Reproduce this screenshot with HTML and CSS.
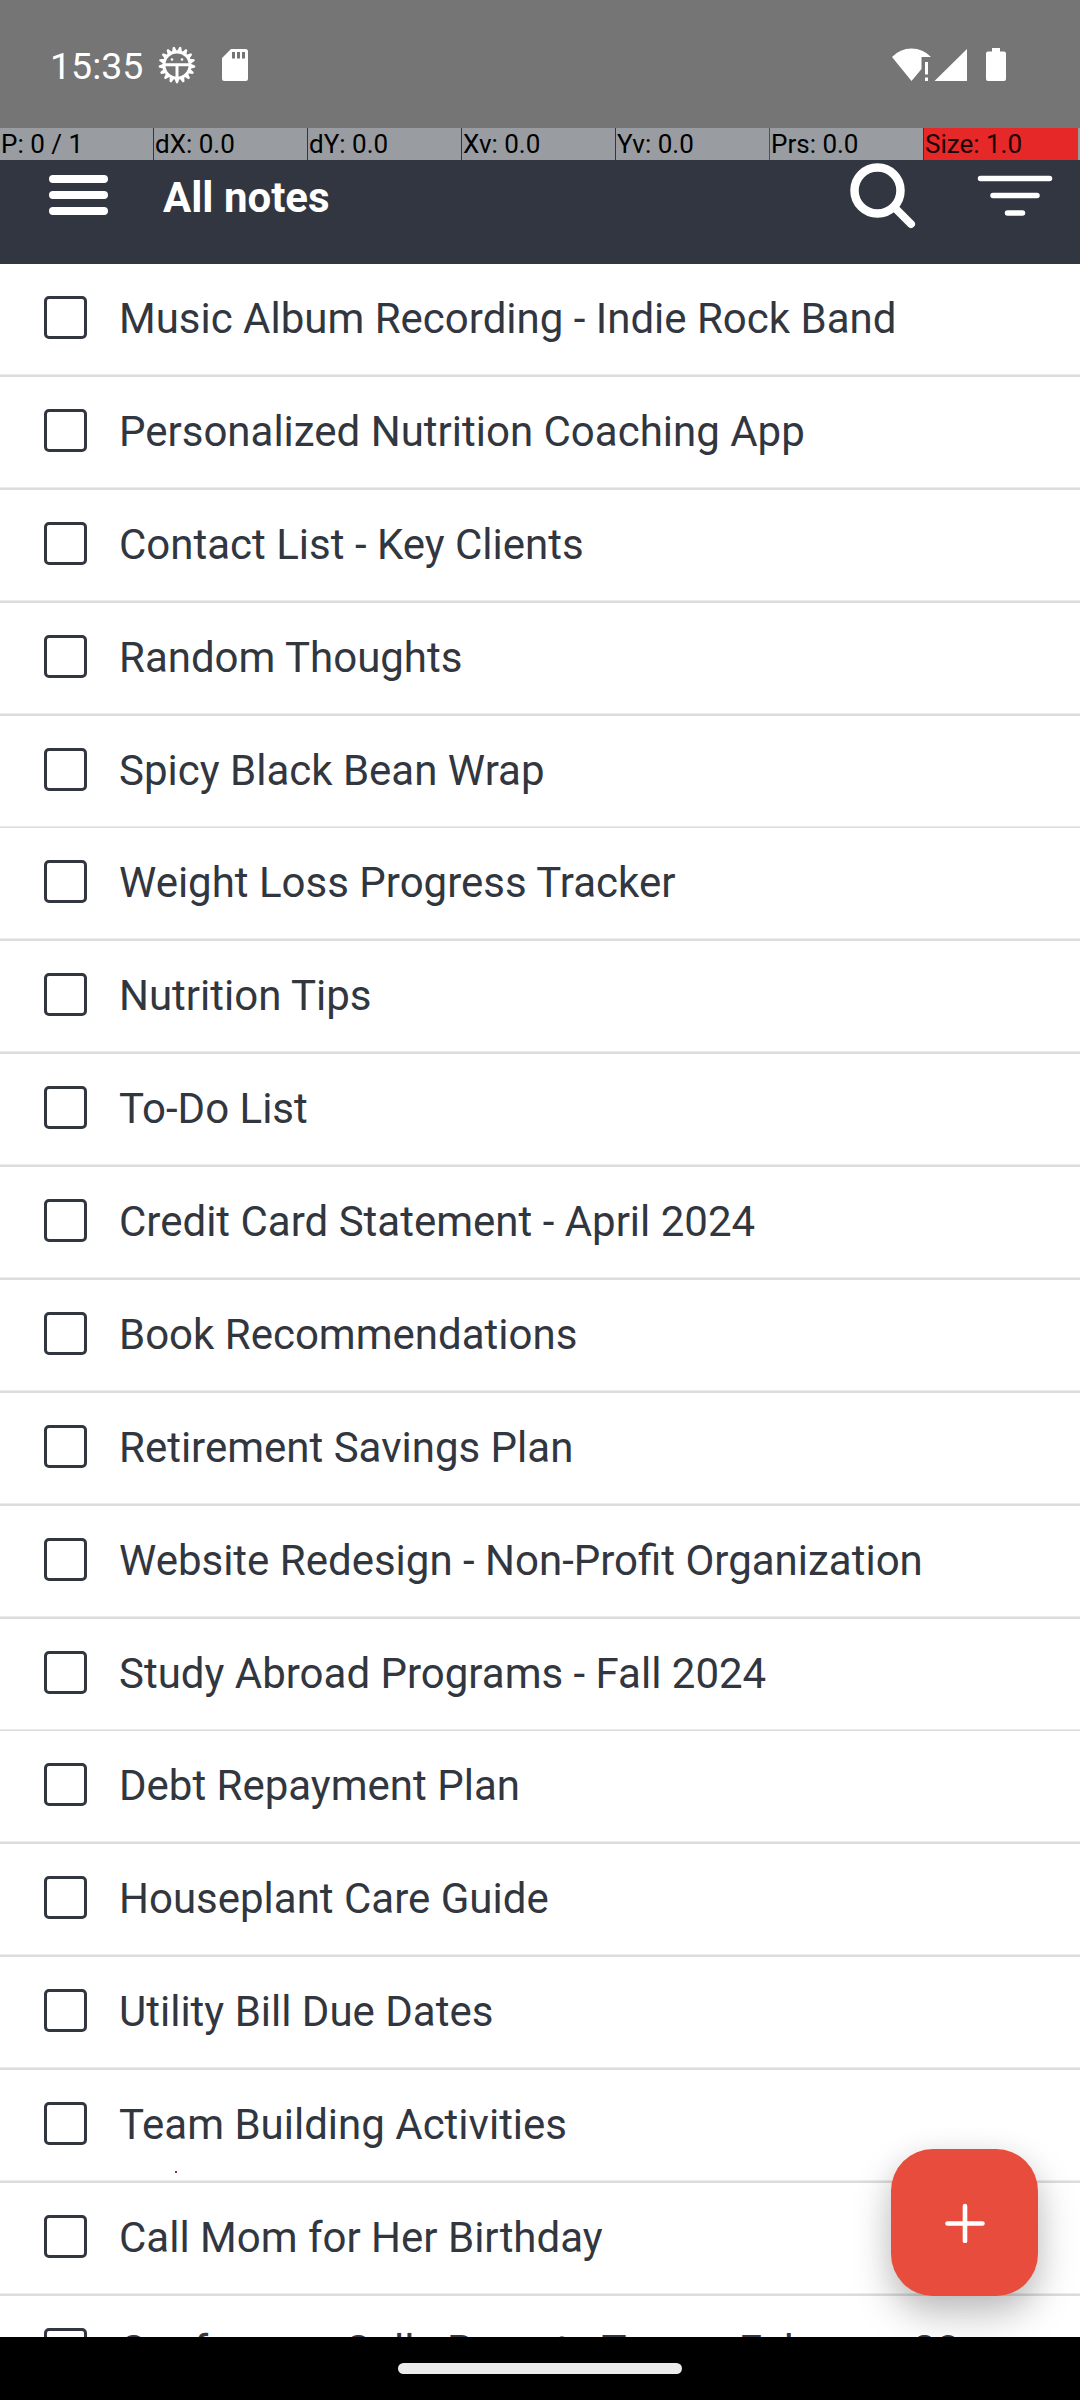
FILE: index.html
```
<!DOCTYPE html>
<html lang="en">
<head>
<meta charset="utf-8">
<title>All notes</title>
<link rel="stylesheet" href="styles.css">
</head>
<body>
<div class="screen">
  <header class="status-bar">
    <span class="clock">15:35</span>
    <svg class="bug-icon" viewBox="-19 -19 38 38">
      <defs><path id="tooth" d="M-2.700 13L-.9 18.300H.9L2.700 13Z"/></defs>
      <circle r="13" fill="none" stroke="#fff" stroke-width="2.800"/>
      <g fill="#fff">
        <use href="#tooth"/><use href="#tooth" transform="rotate(21.180)"/><use href="#tooth" transform="rotate(42.350)"/><use href="#tooth" transform="rotate(63.530)"/><use href="#tooth" transform="rotate(84.710)"/><use href="#tooth" transform="rotate(105.880)"/><use href="#tooth" transform="rotate(127.060)"/><use href="#tooth" transform="rotate(148.240)"/><use href="#tooth" transform="rotate(169.410)"/><use href="#tooth" transform="rotate(190.590)"/><use href="#tooth" transform="rotate(211.760)"/><use href="#tooth" transform="rotate(232.940)"/><use href="#tooth" transform="rotate(254.120)"/><use href="#tooth" transform="rotate(275.290)"/><use href="#tooth" transform="rotate(296.470)"/><use href="#tooth" transform="rotate(317.650)"/><use href="#tooth" transform="rotate(338.820)"/>
        <path d="M-12-1.700h24v3H-12zM-1.500 0h3v12h-3z"/>
        <circle cx="-5" cy="-5.500" r="1.300"/><circle cx="5" cy="-5.500" r="1.300"/>
      </g>
    </svg>
    <svg class="sd-icon" viewBox="0 0 26 32">
      <path fill="#fff" fill-rule="evenodd" d="M9 0H23.500Q26 0 26 2.500V29.500Q26 32 23.500 32H2.500Q0 32 0 29.500V9ZM10 3V9.500H13V3ZM15 3V9.500H18V3ZM20 3V9.500H23V3Z"/>
    </svg>
    <svg class="signal-icons" viewBox="0 0 116 34">
      <path fill="#fff" d="M0 9Q8 .5 19.500 .5T39 9H29.500V21L19.500 33ZM33 14h3v12.500h-3zM33 29.500h3v3.500h-3zM75 1V33H42.500ZM100 0h8v3.500h4Q114 3.500 114 5.500V31Q114 33 112 33H96Q94 33 94 31V5.500Q94 3.500 96 3.500h4z"/>
    </svg>
  </header>
  <div class="pointer-bar">
    <span class="cell">P: 0 / 1</span>
    <span class="cell">dX: 0.0</span>
    <span class="cell">dY: 0.0</span>
    <span class="cell">Xv: 0.0</span>
    <span class="cell cell-press">Yv: 0.0</span>
    <span class="cell">Prs: 0.0</span>
    <span class="cell cell-size">Size: 1.0</span>
  </div>
  <nav class="app-bar">
    <svg class="menu-icon" viewBox="0 0 60 42"><path d="M5 5h51M5 21h51M5 37h51" stroke="#fff" stroke-width="8" stroke-linecap="round"/></svg>
    <h1 class="title">All notes</h1>
    <svg class="search-icon" viewBox="0 0 66 66"><circle cx="27.500" cy="27.500" r="23" fill="none" stroke="#fff" stroke-width="8.500"/><path d="M45 45L61 61" stroke="#fff" stroke-width="8" stroke-linecap="round"/></svg>
    <svg class="sort-icon" viewBox="0 0 76 42"><path d="M3.500 3.500h69M16 20.500h44M30.500 38h15" stroke="#fff" stroke-width="5.500" stroke-linecap="round"/></svg>
  </nav>
  <main class="notes">
    <div class="note"><span class="checkbox"></span><span class="name">Music Album Recording - Indie Rock Band</span></div>
    <div class="note"><span class="checkbox"></span><span class="name">Personalized Nutrition Coaching App</span></div>
    <div class="note"><span class="checkbox"></span><span class="name">Contact List - Key Clients</span></div>
    <div class="note"><span class="checkbox"></span><span class="name">Random Thoughts</span></div>
    <div class="note note-thin"><span class="checkbox"></span><span class="name">Spicy Black Bean Wrap</span></div>
    <div class="note"><span class="checkbox"></span><span class="name">Weight Loss Progress Tracker</span></div>
    <div class="note"><span class="checkbox"></span><span class="name">Nutrition Tips</span></div>
    <div class="note"><span class="checkbox"></span><span class="name">To-Do List</span></div>
    <div class="note"><span class="checkbox"></span><span class="name">Credit Card Statement - April 2024</span></div>
    <div class="note"><span class="checkbox"></span><span class="name">Book Recommendations</span></div>
    <div class="note"><span class="checkbox"></span><span class="name">Retirement Savings Plan</span></div>
    <div class="note"><span class="checkbox"></span><span class="name">Website Redesign - Non-Profit Organization</span></div>
    <div class="note note-thin"><span class="checkbox"></span><span class="name">Study Abroad Programs - Fall 2024</span></div>
    <div class="note"><span class="checkbox"></span><span class="name">Debt Repayment Plan</span></div>
    <div class="note"><span class="checkbox"></span><span class="name">Houseplant Care Guide</span></div>
    <div class="note"><span class="checkbox"></span><span class="name">Utility Bill Due Dates</span></div>
    <div class="note"><span class="checkbox"></span><span class="name">Team Building Activities</span></div>
    <div class="note"><span class="checkbox"></span><span class="name">Call Mom for Her Birthday</span></div>
    <div class="note"><span class="checkbox"></span><span class="name">Conference Call - Remote Team - February 20</span></div>
    <span class="touch-point"></span>
    <button class="add-button" aria-label="New note"><svg class="plus-icon" viewBox="0 0 40 40"><path d="M2.500 20.500h35M20 3v35" stroke="#fff" stroke-width="4.600" stroke-linecap="round"/></svg></button>
  </main>
  <footer class="gesture-bar"><span class="handle"></span></footer>
</div>
</body>
</html>
```
FILE: styles.css
```
* { box-sizing: border-box; }
body { margin: 0; background: #000; font-family: Roboto, "Liberation Sans", sans-serif; }
.screen { width: 1080px; height: 2400px; display: flex; flex-direction: column; overflow: hidden; }
.status-bar { height: 128px; flex: none; background: #757575; color: #fff; display: flex; align-items: center; padding: 2px 78px 0 50px; }
.clock { font-size: 37.500px; line-height: 44px; width: 108px; padding-top: 1px; white-space: nowrap; }
.bug-icon { width: 38px; height: 38px; }
.sd-icon { width: 26px; height: 32px; margin-left: 26px; }
.signal-icons { width: 116px; height: 34px; margin-left: auto; margin-right: -6px; }
.pointer-bar { height: 32px; flex: none; display: grid; grid-template-columns: repeat(7, 154px) 2px; background: #999ca1; }
.cell { font-size: 26px; line-height: 32px; padding-left: 1px; border-right: 1px solid #323640; color: #000; white-space: nowrap; }
.cell-press { border-right-color: #b3262b; }
.cell-size { background: #e62829; border-right: 0; color: #170405; }
.app-bar { height: 104px; flex: none; background: #323640; display: flex; align-items: flex-start; color: #fff; }
.menu-icon { width: 60px; height: 42px; margin: 14px 0 0 48px; }
.title { margin: 13px 0 0 55px; font-size: 42px; line-height: 49px; font-weight: 700; }
.search-icon { width: 66px; height: 66px; margin: 3px 0 0 auto; }
.sort-icon { width: 76px; height: 42px; margin: 15px 27px 0 61px; }
.notes { position: relative; flex: 1; min-height: 0; overflow: hidden; background: #fff; }
.note { height: 112.880px; display: flex; align-items: flex-start; padding: 32px 0 0 44px; color: #32363f; background: linear-gradient(#ececec 0 1px, #dcdcdc 1px) left bottom / 100% 3px no-repeat; }
.note-thin { background-size: 100% 2px; }
.checkbox { width: 43px; height: 43px; border: 3px solid #32363f; border-radius: 5px; flex: none; }
.name { margin: -1px 0 0 32px; font-size: 42px; line-height: 47px; white-space: nowrap; }
.touch-point { position: absolute; left: 175px; top: 1907px; width: 2px; height: 2px; background: #8f2f2f; }
.add-button { position: absolute; right: 42px; bottom: 41px; width: 147px; height: 147px; padding: 0; border: 0; border-radius: 42px; background: #e74c3c; display: grid; place-items: center; box-shadow: 0 18px 38px rgba(0,0,0,.25), 0 2px 30px rgba(0,0,0,.05); }
.plus-icon { width: 40px; height: 40px; }
.gesture-bar { height: 63px; flex: none; background: #000; display: flex; justify-content: center; padding-top: 26px; }
.handle { width: 284px; height: 11px; border-radius: 6px; background: #ebebeb; }
```
